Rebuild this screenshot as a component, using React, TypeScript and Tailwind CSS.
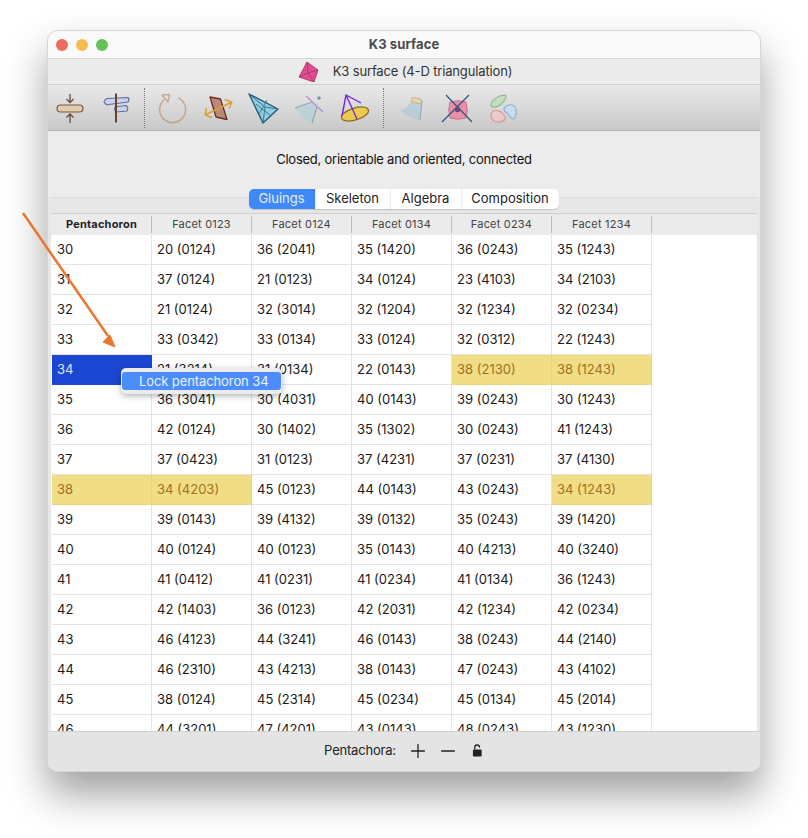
// K3 surface packet window, Gluings tab
import { Minus, Plus } from "lucide-react";

const FACETS = ["Facet 0123", "Facet 0124", "Facet 0134", "Facet 0234", "Facet 1234"];

const ROWS: [string, string[], number[]?][] = [
  ["30", ["20 (0124)", "36 (2041)", "35 (1420)", "36 (0243)", "35 (1243)"]],
  ["31", ["37 (0124)", "21 (0123)", "34 (0124)", "23 (4103)", "34 (2103)"]],
  ["32", ["21 (0124)", "32 (3014)", "32 (1204)", "32 (1234)", "32 (0234)"]],
  ["33", ["33 (0342)", "33 (0134)", "33 (0124)", "32 (0312)", "22 (1243)"]],
  ["34", ["21 (3214)", "31 (0134)", "22 (0143)", "38 (2130)", "38 (1243)"], [4, 5]],
  ["35", ["36 (3041)", "30 (4031)", "40 (0143)", "39 (0243)", "30 (1243)"]],
  ["36", ["42 (0124)", "30 (1402)", "35 (1302)", "30 (0243)", "41 (1243)"]],
  ["37", ["37 (0423)", "31 (0123)", "37 (4231)", "37 (0231)", "37 (4130)"]],
  ["38", ["34 (4203)", "45 (0123)", "44 (0143)", "43 (0243)", "34 (1243)"], [0, 1, 5]],
  ["39", ["39 (0143)", "39 (4132)", "39 (0132)", "35 (0243)", "39 (1420)"]],
  ["40", ["40 (0124)", "40 (0123)", "35 (0143)", "40 (4213)", "40 (3240)"]],
  ["41", ["41 (0412)", "41 (0231)", "41 (0234)", "41 (0134)", "36 (1243)"]],
  ["42", ["42 (1403)", "36 (0123)", "42 (2031)", "42 (1234)", "42 (0234)"]],
  ["43", ["46 (4123)", "44 (3241)", "46 (0143)", "38 (0243)", "44 (2140)"]],
  ["44", ["46 (2310)", "43 (4213)", "38 (0143)", "47 (0243)", "43 (4102)"]],
  ["45", ["38 (0124)", "45 (2314)", "45 (0234)", "45 (0134)", "45 (2014)"]],
  ["46", ["44 (3201)", "47 (4201)", "43 (0143)", "48 (0243)", "43 (1230)"]],
];

const TABS = [
  { label: "Gluings", w: "w-[66px]", on: true },
  { label: "Skeleton", w: "w-[75px]" },
  { label: "Algebra", w: "w-[71px]" },
  { label: "Composition", w: "w-[98px]" },
];

function Cell({ text, yellow, selected }: { text: string; yellow?: boolean; selected?: boolean }) {
  let tone = "bg-white text-[#1a1a1a] border-[#e3e3e3]";
  if (yellow) tone = "bg-[#f0dd85] text-[#a3701f] border-[#e8d77f]";
  if (selected) tone = "bg-[#1b46d2] text-[#dfe6ff] border-[#1b46d2]";
  return (
    <div className={`h-[30px] w-[100px] shrink-0 border-r border-b pl-[5px] leading-[28px] ${tone}`}>{text}</div>
  );
}

function Divider() {
  return <div className="mx-[-1.5px] h-[40px] border-l border-dotted border-[#777]" />;
}

function IconSlot({ children }: { children: React.ReactNode }) {
  return <svg viewBox="0 0 32 32" className="h-[32px] w-[32px] shrink-0">{children}</svg>;
}

function Toolbar() {
  return (
    <div className="flex h-[46px] items-center gap-[13.5px] border-b border-[#b5b5b5] bg-gradient-to-b from-[#e9e9e9] to-[#c9c9c9] pl-[6px]">
      <IconSlot>
        <rect x="3" y="13" width="26" height="7" rx="3.5" fill="#e3c9ae" stroke="#7d5a3c" strokeWidth="1.2" />
        <path d="M16 2v8.5M12.5 7l3.5 3.5L19.500 7M16 31v-9M12.500 25.500L16 22l3.500 3.500" fill="none" stroke="#6d4c32" strokeWidth="1.3" />
      </IconSlot>
      <IconSlot>
        <path d="M7 6.500L28 5.500q2 2 0 4.500L9 12.500q-3 1-5-2.500 1-3 3-3.500zM17 14.500l9-1q3 2 1 5.500l-11 1q-2-2-1-5z" fill="#c9d3ea" stroke="#5c6aa0" strokeWidth="1.1" strokeLinejoin="round" />
        <path d="M16 1.500v29" stroke="#6b4024" strokeWidth="2" />
      </IconSlot>
      <Divider />
      <IconSlot>
        <g opacity="0.55" transform="translate(-2 0)">
          <path d="M9.500 7.500a13 13 0 1 0 14-1.500" fill="none" stroke="#b5805c" strokeWidth="1.5" />
          <path d="M7 3l7.500-.5-1.500 7.500z" fill="none" stroke="#b5805c" strokeWidth="1.5" strokeLinejoin="round" />
        </g>
      </IconSlot>
      <IconSlot>
        <path d="M8 5l10.500 2L25 27.500l-11-2.500z" fill="#b98a78" stroke="#6d2c22" strokeWidth="1.3" strokeLinejoin="round" />
        <path d="M3 23l27-13M3 23l1.500-7M3 23l7 2.500M30 10l-7.500-2.500M30 10l-3 6.500" fill="none" stroke="#dca12c" strokeWidth="1.5" />
      </IconSlot>
      <IconSlot>
        <path d="M1 2l29 15-15 14z" fill="#93cbe0" stroke="#1f5d75" strokeWidth="1.4" strokeLinejoin="round" />
        <path d="M1 2l16 13 13 2M17 15l-2 16M8 12l15 12M11 22l8-14" fill="none" stroke="#2a7087" strokeWidth="0.9" />
      </IconSlot>
      <IconSlot>
        <g opacity="0.65">
          <path d="M2 16l17-6 5 5-5 16q-11-4-17-15z" fill="#b4d0da" />
          <path d="M2 16l17-6M24 15l-5 16" fill="none" stroke="#6a8d9c" strokeWidth="1.1" />
          <path d="M13 4l17 16" stroke="#9a6fd0" strokeWidth="1.3" />
          <circle cx="26" cy="6" r="1.700" fill="#2b6f8c" />
        </g>
      </IconSlot>
      <IconSlot>
        <ellipse cx="16" cy="22" rx="14" ry="6" transform="rotate(-17 16 22)" fill="#ecca4d" stroke="#8f6a2a" strokeWidth="1.3" />
        <path d="M3 24L7 3l15 8M7 3l11 24" fill="none" stroke="#7a28d6" strokeWidth="1.4" />
      </IconSlot>
      <Divider />
      <IconSlot>
        <g opacity="0.6">
          <path d="M4 19c6-2 10-7 12-12l10 3-2 18q-11-2-20-9z" fill="#a9c8d8" />
          <path d="M26 9l-2 19" stroke="#6a8d9c" strokeWidth="1.1" fill="none" />
          <ellipse cx="20.500" cy="8.500" rx="5.500" ry="2.500" transform="rotate(15 20.500 8.500)" fill="#e8d38c" stroke="#b59b55" strokeWidth="1" />
        </g>
      </IconSlot>
      <IconSlot>
        <path d="M9 10q8-2.500 16 0 2.500 8 0 16-8 2.500-16 0-2.500-8 0-16z" fill="#ea8fa8" stroke="#cf6e8a" strokeWidth="1" />
        <path d="M5 3l26 27M28 3L1 30" stroke="#2d5688" strokeWidth="1.2" />
        <circle cx="16.500" cy="17.500" r="2.800" fill="#6d4a70" />
      </IconSlot>
      <IconSlot>
        <g opacity="0.7">
          <path d="M4 13c0-5 8-10 14-10 3 1-1 7-5 10s-9 3-9 0z" fill="#bcdcb4" stroke="#6aa86a" strokeWidth="1.1" />
          <path d="M17 17c1-4 9-6 11-2s1 12-2 12-4-5-6-6-3-2-3-4z" fill="#c3e0f2" stroke="#5ca2d6" strokeWidth="1.1" />
          <path d="M4 23c0-5 5-5 8-4s7 5 6 8-8 4-11 2-3-4-3-6z" fill="#f4c6c6" stroke="#d77878" strokeWidth="1.1" />
        </g>
      </IconSlot>
    </div>
  );
}

function GluingsTable() {
  return (
    <div className="mx-[3px] flex-1 overflow-hidden border-t border-[#cfcfcf] bg-white">
      <div className="flex h-[21px] items-center bg-[#ebebeb] text-[11px] tracking-[0.2px]">
        <div className="ml-px h-[17px] w-[100px] shrink-0 border-r border-[#bdbdbd] text-center font-bold leading-[17px] text-[#222]">Pentachoron</div>
        {FACETS.map((f) => (
          <div key={f} className="h-[17px] w-[100px] shrink-0 border-r border-[#bdbdbd] text-center leading-[17px] text-[#444]">{f}</div>
        ))}
      </div>
      {ROWS.map(([n, cells, marked]) => (
        <div key={n} className="ml-px flex">
          <Cell text={n} selected={n === "34"} yellow={marked?.includes(0)} />
          {cells.map((c, i) => (
            <Cell key={i} text={c} yellow={marked?.includes(i + 1)} />
          ))}
        </div>
      ))}
    </div>
  );
}

export default function App() {
  return (
    <div className="relative h-[838px] w-[808px] overflow-hidden bg-white pl-[47px] pt-[30px] font-['Inter',sans-serif] text-[13px] text-black">
      <div className="flex h-[742px] w-[714px] flex-col overflow-hidden rounded-[11px] border border-[#d6d6d6] bg-[#ececec] shadow-[0_22px_40px_rgba(0,0,0,0.38)]">
        {/* title bar */}
        <div className="relative flex h-[28px] shrink-0 items-center justify-center border-b border-[#d4d4d4] bg-[#fafafa] text-[13px] font-bold tracking-[0.1px] text-[#4a4a4a]">
          <div className="absolute left-[8px] top-[8px] flex gap-[8px]">
            <span className="h-[12px] w-[12px] rounded-full bg-[#ee6a5f]" />
            <span className="h-[12px] w-[12px] rounded-full bg-[#f5bd4f]" />
            <span className="h-[12px] w-[12px] rounded-full bg-[#61c454]" />
          </div>
          K3 surface
        </div>
        {/* packet header */}
        <div className="flex h-[26px] shrink-0 items-center justify-center gap-[14px] border-b border-[#cfcfcf] bg-[#ebebeb] pl-[3px] pt-[1px] tracking-[-0.15px] text-[#333]">
          <svg viewBox="0 0 20 20" className="h-[20px] w-[20px]">
            <path d="M8 0l11 8-4 12-15-5z" fill="#dd4f8e" stroke="#a82a66" strokeWidth="0.8" strokeLinejoin="round" />
            <path d="M8 0l1 11 10-3M9 11l6 9M9 11l-9 4" fill="none" stroke="#a82a66" strokeWidth="0.7" />
          </svg>
          K3 surface (4-D triangulation)
        </div>
        <Toolbar />
        {/* tab body */}
        <div className="flex h-[58px] shrink-0 items-center justify-center tracking-[-0.24px] text-[#111]">Closed, orientable and oriented, connected</div>
        <div className="relative z-10 mb-[-12px] flex h-[20px] shrink-0 justify-center pr-[1px] text-[13px]">
          {TABS.map((t) => (
            <div
              key={t.label}
              className={`${t.w} flex items-center justify-center shadow-[0_1px_1px_rgba(0,0,0,0.15)] ${
                t.on ? "rounded-l-[5px] bg-[#3f88f8] text-[#e4efff]" : "border-l border-[#eee] bg-white text-[#222]"
              } ${t.label === "Composition" ? "rounded-r-[5px]" : ""}`}
            >
              {t.label}
            </div>
          ))}
        </div>
        <div className="flex min-h-0 flex-1 flex-col rounded-t-[5px] border-t border-[#dedede] bg-[#e7e7e7] pt-[15px]">
          <GluingsTable />
        </div>
        {/* footer */}
        <div className="flex h-[40px] shrink-0 items-center justify-center border-t border-[#d0d0d0] bg-[#e4e4e4] pb-[2px] pr-[1px] tracking-[-0.2px] text-[#222]">
          <span>Pentachora:</span>
          <Plus size={22} strokeWidth={1.4} className="ml-[11px]" />
          <Minus size={22} strokeWidth={1.4} className="ml-[8px]" />
          <svg viewBox="0 0 12 14" className="ml-[13px] h-[13px] w-[11px]">
            <path d="M3 6V3.600a2.600 2.600 0 0 1 5.200 0" fill="none" stroke="#222" strokeWidth="1.4" />
            <rect x="1" y="6" width="9.500" height="7.500" rx="1" fill="#222" />
          </svg>
        </div>
      </div>

      {/* screenshot annotation */}
      <svg viewBox="0 0 808 838" className="pointer-events-none absolute left-0 top-0 h-[838px] w-[808px]">
        <path d="M23 213L108 336" stroke="#e9782f" strokeWidth="2.5" />
        <path d="M115 347L103 342 110 335z" fill="#e9782f" stroke="#e9782f" strokeWidth="1" strokeLinejoin="round" />
      </svg>

      {/* context menu */}
      <div className="absolute left-[121px] top-[368px] flex h-[26px] w-[161px] items-center rounded-[5px] bg-[#ececec] px-px shadow-[0_2px_6px_rgba(0,0,0,0.3)]">
        <div className="h-[18px] w-full rounded-[3px] bg-[#4c8dfb] pl-[17px] text-[13px] leading-[18px] tracking-[-0.1px] text-[#eaf2ff]">Lock pentachoron 34</div>
      </div>
    </div>
  );
}
